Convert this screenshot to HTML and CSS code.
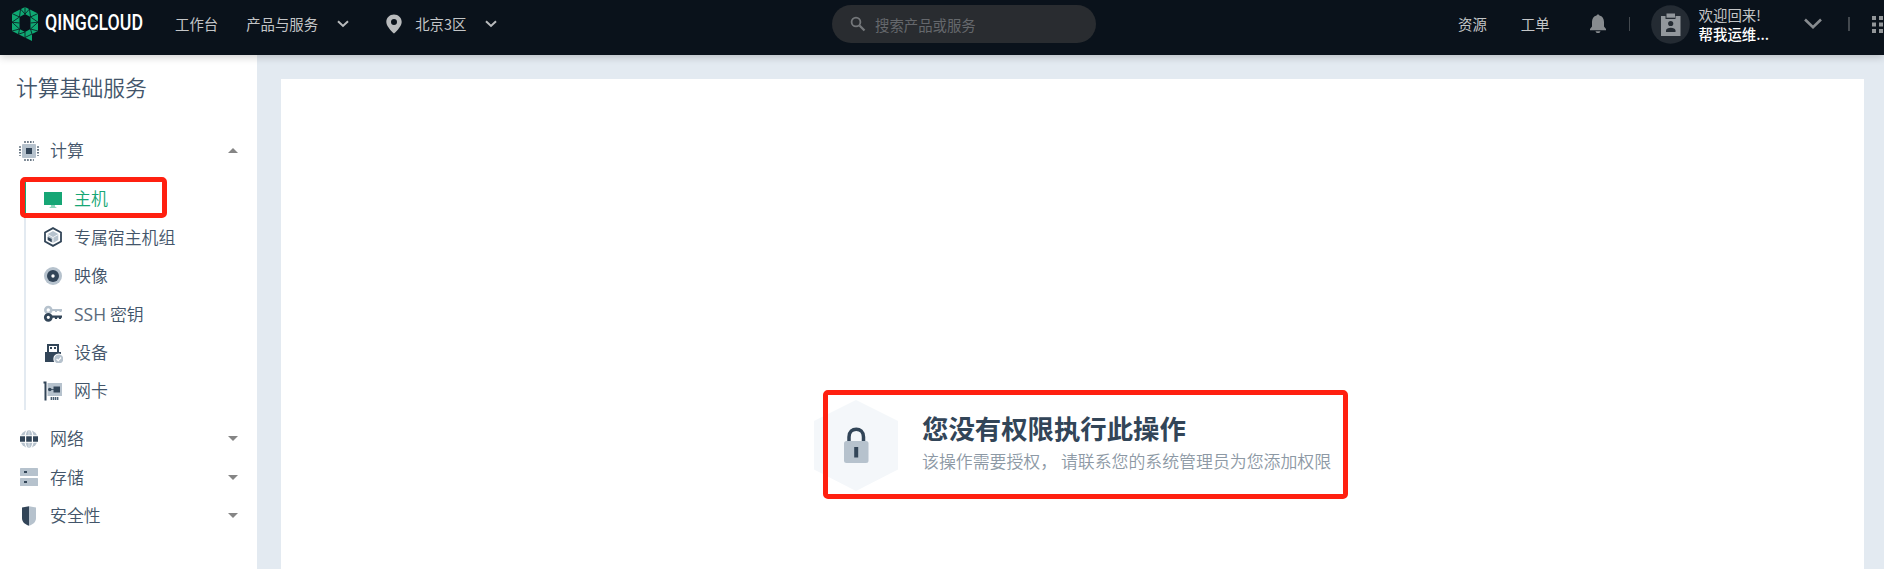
FILE: index.html
```html
<!DOCTYPE html>
<html lang="zh-CN">
<head>
<meta charset="utf-8">
<title>QingCloud</title>
<link rel="stylesheet" href="styles.css">
</head>
<body>
<header class="header">
  <svg class="logo" width="140" height="40" viewBox="0 0 140 40">
    <path fill="#0fa873" fill-rule="evenodd" d="M15 2L28 8.500V26L22 29V36L2 26V8.500ZM15 9L9.500 12V24L15 27L20.500 24V12Z"/>
    <path stroke="#0a121b" stroke-width=".8" fill="none" d="M15 9L10.500 4M15 9L19.500 4M15 2V9M9.500 12L10.500 4M20.500 12L19.500 4M9.500 12L2 8.500M20.500 12L28 8.500M9.500 12L2 17.200L9.500 18M20.500 12L28 17.200L20.500 18M2 17.200L9.500 24L2 26M28 17.200L20.500 24L28 26M9.500 24L8.500 29.200L15 27L15 32.500L22 29L20.500 24"/>
    <text x="35" y="25" class="logo-text" textLength="98" lengthAdjust="spacingAndGlyphs">QINGCLOUD</text>
  </svg>
  <nav class="nav">
    <a>工作台</a>
    <a class="nav-products">产品与服务</a>
    <svg class="chev" width="12" height="8" viewBox="0 0 12 8"><path d="M1 1.300L6 6L11 1.300"/></svg>
    <svg class="pin" width="16" height="20" viewBox="0 0 16 20"><path fill="#b9bbbd" fill-rule="evenodd" d="M8 .5C3.600.5.300 3.800.300 8 .300 13 8 19.500 8 19.500S15.700 13 15.700 8C15.700 3.800 12.400.5 8 .5ZM8 5A3 3 0 1 1 8 11A3 3 0 1 1 8 5Z"/></svg>
    <a>北京3区</a>
    <svg class="chev" width="12" height="8" viewBox="0 0 12 8"><path d="M1 1.300L6 6L11 1.300"/></svg>
  </nav>
  <div class="search">
    <svg width="16" height="16" viewBox="0 0 16 16"><g fill="none" stroke="#74777a"><circle cx="6" cy="6" r="4.400" stroke-width="1.800"/><path stroke-width="2.300" d="M9.500 9.500L14.500 14.500"/></g></svg>
    <span>搜索产品或服务</span>
  </div>
  <div class="tools">
    <a>资源</a>
    <a class="ticket">工单</a>
    <svg class="bell" width="18" height="20" viewBox="0 0 18 20"><path fill="#878b8f" d="M7.600 1.500C7.600 0 10.400 0 10.400 1.500 13.500 2.200 15 4.700 15 8V12.500L17 15V16.300H1V15L3 12.500V8C3 4.700 4.500 2.200 7.600 1.500ZM6.500 17.200H11.500C11 19.700 7 19.700 6.500 17.200Z"/></svg>
    <i class="bar"></i>
    <svg class="avatar" width="39" height="39" viewBox="0 0 39 39"><circle cx="19.500" cy="19.500" r="19.300" fill="#242b33"/><path fill="#92979c" d="M10 11H14.500V14H24.500V11H29.500V31H10Z"/><path fill="#92979c" d="M15.500 8.500H24V12.700H15.500Z"/><circle cx="19.700" cy="18.500" r="2.600" fill="#242b33"/><path fill="#242b33" d="M15 27V25.500C15 21.700 24.500 21.700 24.500 25.500V27Z"/></svg>
    <div class="user"><span>欢迎回来!</span><b>帮我运维...</b></div>
    <svg class="chev-lg" width="18" height="12" viewBox="0 0 18 12"><path d="M1 1.500L9 9.300L17 1.500"/></svg>
    <i class="bar bar-end"></i>
    <svg class="apps" width="11" height="17" viewBox="0 0 11 17"><path fill="#929699" d="M0 0h4v4H0zM7 0h4v4H7zM0 6.500h4v4H0zM7 6.500h4v4H7zM0 13h4v4H0zM7 13h4v4H7z"/></svg>
  </div>
</header>
<div class="body">
  <aside class="sidebar">
    <h1>计算基础服务</h1>
    <div class="row group">
      <svg width="20" height="20" viewBox="0 0 20 20"><path stroke="#324558" stroke-width="1.500" stroke-dasharray="1.600 1.300" fill="none" d="M5.200 1H14.800M5.200 19H14.800M1 5.200V14.800M19 5.200V14.800"/><rect x="3" y="3" width="14" height="14" rx="1" fill="#b6c2cd"/><path fill="#324558" d="M7 7h6v6H7z"/></svg>
      <span>计算</span><svg class="caret" width="10" height="5" viewBox="0 0 10 5"><path d="M0 5L5 0L10 5Z"/></svg>
    </div>
    <ul class="sub">
      <li class="row active"><svg width="20" height="20" viewBox="0 0 20 20"><path fill="#16a675" d="M1 3h18v13H1z"/><path fill="#8fd7bd" d="M8 16h4v1.500l2 1.500H6l2-1.500z"/></svg><span>主机</span></li>
      <li class="row"><svg width="20" height="20" viewBox="0 0 20 20"><path d="M10 1.100L18 5.500V14.500L10 18.900L2 14.500V5.500Z" fill="none" stroke="#324558" stroke-width="1.800"/><path fill="#b6c2cd" d="M10 4L15.300 7V13L10 16L4.700 13V7Z"/><path stroke="#fff" stroke-width=".8" fill="none" d="M4.700 7.500L10 10.500L15.300 7.500M10 10.500V16"/><path fill="#324558" d="M4.700 10L8.700 12V15.300L4.700 13Z"/></svg><span>专属宿主机组</span></li>
      <li class="row"><svg width="20" height="20" viewBox="0 0 20 20"><circle cx="10" cy="10" r="9" fill="#b6c2cd"/><circle cx="10" cy="10" r="6" fill="#324558"/><circle cx="10" cy="10" r="1.700" fill="#fff"/></svg><span>映像</span></li>
      <li class="row"><svg width="20" height="20" viewBox="0 0 20 20"><g fill="none" stroke="#b6c2cd"><circle cx="5.300" cy="6" r="3" stroke-width="2.600"/><path stroke-width="2" d="M9 6H19M13 6V8M17.500 6V8"/></g><circle cx="5.300" cy="13.300" r="4.600" fill="#fff"/><g fill="none" stroke="#324558"><circle cx="5.300" cy="13.300" r="3" stroke-width="2.800"/><path stroke-width="2.200" d="M9 12.700H19M13 13V15M17 13V15"/></g></svg><span><em>SSH</em> 密钥</span></li>
      <li class="row"><svg width="20" height="20" viewBox="0 0 20 20"><path fill="#324558" fill-rule="evenodd" d="M4 1H16V9H18V19H2V9H4ZM6 3V9H14V3Z"/><path fill="#324558" d="M7 4h2v2H7zM11 4h2v2h-2z"/><circle cx="15.800" cy="16" r="5.500" fill="#fff"/><circle cx="15.800" cy="16" r="4.500" fill="#b6c2cd"/><path d="M13.600 16L15.300 17.700L18 14.500" fill="none" stroke="#fff" stroke-width="1.200"/></svg><span>设备</span></li>
      <li class="row"><svg width="20" height="20" viewBox="0 0 20 20"><path fill="#324558" d="M.5.5H3.500V19.500H1.500V2.500H.5Z"/><path fill="#b6c2cd" d="M4.500 2H19V15H4.500ZM7 16H16V19H7Z"/><path fill="#324558" d="M10.500 5.500h6.500v6h-6.500z"/><circle cx="6.800" cy="8.500" r="1.800" fill="#324558"/><path stroke="#324558" stroke-width=".8" d="M7 8.500H11M8.500 16V19M10.500 16V19M12.500 16V19M14.500 16V19"/></svg><span>网卡</span></li>
    </ul>
    <div class="row group">
      <svg width="20" height="20" viewBox="0 0 20 20"><circle cx="10" cy="10" r="9" fill="#b6c2cd"/><ellipse cx="10" cy="10" rx="4.200" ry="10" fill="none" stroke="#fff" stroke-width="1.100"/><path stroke="#fff" stroke-width=".6" d="M10 0V20"/><path fill="#fff" d="M0 6.300h20v7.400H0z"/><path fill="#324558" d="M1 7.200h5v5.600H1zM7.200 7.200h5.600v5.600H7.200zM14 7.200h5v5.600h-5z"/></svg>
      <span>网络</span><svg class="caret" width="10" height="5" viewBox="0 0 10 5"><path d="M0 0L5 5L10 0Z"/></svg>
    </div>
    <div class="row group">
      <svg width="20" height="20" viewBox="0 0 20 20"><rect x="1" y="1" width="18" height="8" rx=".6" fill="#b6c2cd"/><rect x="1" y="11" width="18" height="8" rx=".6" fill="#b6c2cd"/><path fill="#324558" d="M5 4h3v2H5zM5 14h3v2H5z"/></svg>
      <span>存储</span><svg class="caret" width="10" height="5" viewBox="0 0 10 5"><path d="M0 0L5 5L10 0Z"/></svg>
    </div>
    <div class="row group">
      <svg width="20" height="20" viewBox="0 0 20 20"><path fill="#324558" d="M10 .3L3 1.500V12C3 16 6 18.500 10 19.800Z"/><path fill="#b6c2cd" d="M10 .3L17 1.500V12C17 16 14 18.500 10 19.800Z"/></svg>
      <span>安全性</span><svg class="caret" width="10" height="5" viewBox="0 0 10 5"><path d="M0 0L5 5L10 0Z"/></svg>
    </div>
  </aside>
  <main class="main">
    <section class="card">
      <div class="empty">
        <svg width="84" height="91" viewBox="0 0 84 91"><path fill="#f4f7fa" d="M42 0L84 21V69.500L42 91L0 69.500V21Z"/><path d="M35 42V37C35 26.500 49.500 26.500 49.500 37V42" fill="none" stroke="#324558" stroke-width="3.500"/><rect x="30" y="41" width="24.500" height="22" rx="2.500" fill="#b6c2cd"/><path fill="#324558" d="M40.200 47h4v10.500h-4z"/></svg>
        <div class="message"><h2>您没有权限执行此操作</h2><p>该操作需要授权， 请联系您的系统管理员为您添加权限</p></div>
      </div>
    </section>
  </main>
</div>
<div class="mark mark-menu"></div>
<div class="mark mark-message"></div>
</body>
</html>
```
FILE: styles.css
```css
* { box-sizing: border-box; margin: 0; padding: 0; }
body {
  width: 1884px; height: 569px; overflow: hidden; position: relative;
  font-family: "Noto Sans CJK SC", sans-serif; font-weight: 350;
  color: #324558; background: #e3eaf1;
}
svg { flex: none; display: block; }
.header {
  position: relative; z-index: 1; height: 55px; display: flex; align-items: flex-start;
  background: #0a121b; color: #c3c5c7; font-size: 14.4px; line-height: 20px;
  box-shadow: 0 2px 8px rgba(0, 0, 0, .2); white-space: nowrap;
}
.logo { margin: 5px 0 0 10px; overflow: visible; }
.logo-text { font: 500 22px Roboto, sans-serif; fill: #fff; }
.nav { display: flex; flex: 0 0 657px; align-items: center; height: 48px; margin-left: 25px; font-weight: 400; }
.nav-products { margin-left: 28px; }
.chev { margin-left: 19px; }
.chev path, .chev-lg path { fill: none; stroke: #b9bbbd; stroke-width: 2; }
.pin { margin: 0 13px 0 37px; }
.search {
  flex: none; width: 264px; height: 38px; margin-top: 5px; padding-left: 18px; border-radius: 19px;
  display: flex; align-items: center; gap: 9px; background: #292c30; color: #65686c; font-weight: 400;
}
.search span { padding-top: 2px; }
.tools { flex: none; display: flex; align-items: center; height: 48px; margin-left: 362px; font-weight: 400; }
.ticket { margin-left: 34px; }
.bell { margin-left: 39px; }
.bar { width: 1px; height: 14px; margin-left: 22px; background: #43494f; }
.avatar { margin-left: 21px; }
.user { width: 72px; margin-left: 9px; display: flex; flex-direction: column; line-height: 19px; }
.user b { font-weight: 500; color: #fff; }
.chev-lg { margin-left: 33px; }
.chev-lg path { stroke: #878b8f; stroke-width: 2.600; }
.bar-end { width: 2px; margin-left: 26px; }
.apps { margin-left: 22px; }
.body { display: flex; height: 514px; }
.sidebar { width: 257px; background: #fff; padding-top: 16px; color: #43556a; }
h1 { height: 60.800px; padding-left: 16px; font-size: 21.800px; line-height: 32px; font-weight: 350; }
.row { height: 38.400px; display: flex; align-items: center; font-size: 16.900px; white-space: nowrap; }
.row span { margin-left: 11px; padding-bottom: 1px; line-height: 24px; }
.group { padding: 0 19px; }
.group span { flex: 1; }
.caret { fill: #858585; }
.sub { margin: 9.600px 0 9.600px 24px; border-left: 2px solid #e3eaf1; list-style: none; }
.sub .row { padding-left: 17px; }
.sub .active { margin-left: -2px; border-left: 2px solid #16a675; color: #16a675; }
em { font: 400 17.500px/20px "Open Sans", sans-serif; color: #5a6a7b; }
.main { flex: 1; padding: 24px 20px 0 24px; }
.card { height: 490px; padding: 321px 0 0 533px; background: #fff; }
.empty { display: flex; }
.message { margin-left: 24px; padding-top: 9px; white-space: nowrap; }
h2 { font-size: 26.400px; line-height: 38px; font-weight: 700; }
p { font-size: 16.900px; line-height: 28px; color: #8d99a5; }
.mark { position: absolute; z-index: 2; border: 5px solid #ff2010; border-radius: 5px; }
.mark-menu { left: 20px; top: 177px; width: 147px; height: 41px; }
.mark-message { left: 823px; top: 390px; width: 525px; height: 109px; }
```
